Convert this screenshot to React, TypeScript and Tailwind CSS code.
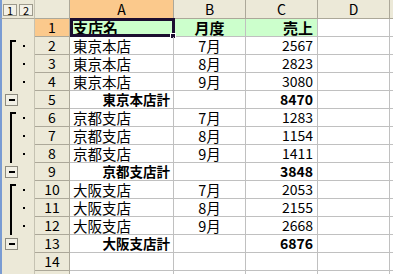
import React from "react";

type Row = { n: number; a?: string; b?: string; c?: string; head?: boolean; total?: boolean; ol?: "start" | "mid" | "btn"; hideNum?: boolean };

const rows: Row[] = [
  { n: 1, a: "支店名", b: "月度", c: "売上", head: true },
  { n: 2, a: "東京本店", b: "7月", c: "2567", ol: "start" },
  { n: 3, a: "東京本店", b: "8月", c: "2823", ol: "mid" },
  { n: 4, a: "東京本店", b: "9月", c: "3080", ol: "mid" },
  { n: 5, a: "東京本店計", c: "8470", total: true, ol: "btn" },
  { n: 6, a: "京都支店", b: "7月", c: "1283", ol: "start" },
  { n: 7, a: "京都支店", b: "8月", c: "1154", ol: "mid" },
  { n: 8, a: "京都支店", b: "9月", c: "1411", ol: "mid" },
  { n: 9, a: "京都支店計", c: "3848", total: true, ol: "btn" },
  { n: 10, a: "大阪支店", b: "7月", c: "2053", ol: "start" },
  { n: 11, a: "大阪支店", b: "8月", c: "2155", ol: "mid" },
  { n: 12, a: "大阪支店", b: "9月", c: "2668", ol: "mid" },
  { n: 13, a: "大阪支店計", c: "6876", total: true, ol: "btn" },
  { n: 14 },
  { n: 15, hideNum: true },
];

function Outline({ ol }: { ol?: Row["ol"] }) {
  return (
    <div className="relative w-[35px] shrink-0 h-full bg-[#ece9d8] border-l-2 border-l-[#7a9cd3] border-r border-r-[#c5c2b2]">
      {ol === "start" && (
        <>
          <div className="absolute left-[8px] top-[3px] w-[2px] h-[15px] bg-black" />
          <div className="absolute left-[8px] top-[3px] w-[6px] h-[2px] bg-black" />
        </>
      )}
      {ol === "mid" && <div className="absolute left-[8px] top-0 w-[2px] h-[18px] bg-black" />}
      {(ol === "start" || ol === "mid") && (
        <div className="absolute left-[21px] top-[8px] w-[2px] h-[2px] bg-black" />
      )}
      {ol === "btn" && (
        <div className="absolute left-[3px] top-[3px] w-[13px] h-[12px] border border-[#8e8c80] bg-[#f1efe4] flex items-center justify-center">
          <div className="w-[6px] h-[2px] bg-black" />
        </div>
      )}
    </div>
  );
}

export default function App() {
  const font = "font-['Noto_Sans_CJK_JP','Liberation_Sans',sans-serif]";
  return (
    <div className={`w-[393px] h-[274px] overflow-hidden bg-white text-black ${font}`}>
      {/* header row */}
      <div className="flex h-[19px]">
        <div className="relative w-[35px] shrink-0 h-full bg-[#ece9d8] border-l-2 border-l-[#7a9cd3] border-r border-r-[#c5c2b2] border-b border-b-[#aca899]">
          <div className="absolute left-[1px] top-[4px] w-[14px] h-[12px] border border-[#9d9a8c] bg-[#f3f1e7] text-[11px] leading-[10px] flex items-center justify-center">1</div>
          <div className="absolute left-[17px] top-[4px] w-[14px] h-[12px] border border-[#9d9a8c] bg-[#f3f1e7] text-[11px] leading-[10px] flex items-center justify-center">2</div>
        </div>
        <div className="w-[35px] shrink-0 bg-[#ece9d8] border-r border-b border-[#aca899]" />
        <div className="w-[104px] shrink-0 bg-[#fbc98c] border-r border-b border-[#aca899] text-center text-[14px] leading-[18px]">A</div>
        <div className="w-[72px] shrink-0 bg-[#ece9d8] border-r border-b border-[#aca899] text-center text-[14px] leading-[18px]">B</div>
        <div className="w-[72px] shrink-0 bg-[#ece9d8] border-r border-b border-[#aca899] text-center text-[14px] leading-[18px]">C</div>
        <div className="w-[72px] shrink-0 bg-[#ece9d8] border-r border-b border-[#aca899] text-center text-[14px] leading-[18px]">D</div>
        <div className="flex-1 bg-[#ece9d8] border-b border-[#aca899]" />
      </div>
      {rows.map((r) => (
        <div key={r.n} className="flex h-[18px]">
          <Outline ol={r.ol} />
          <div
            className={`w-[35px] shrink-0 border-r border-b border-[#aca899] text-center text-[14px] leading-[17px] ${
              r.head ? "bg-[#fbc98c]" : "bg-[#ece9d8]"
            }`}
          >
            {r.hideNum ? "" : r.n}
          </div>
          <div
            className={`relative w-[104px] shrink-0 border-r border-b border-[#c0c0c0] px-[3px] leading-[17px] whitespace-nowrap ${
              r.head ? "bg-[#ccffcc] font-bold text-[15px]" : r.total ? "text-right font-bold text-[13.5px]" : "text-[14.5px]"
            }`}
          >
            {r.a}
            {r.head && (
              <>
                <div className="absolute left-0 top-[-1px] w-[105px] h-[19px] border-[3px] border-[#1c0d30]" />
                <div className="absolute left-[100px] top-[14px] w-[6px] h-[6px] bg-[#1c0d30] border border-white" />
              </>
            )}
          </div>
          <div
            className={`w-[72px] shrink-0 border-r border-b border-[#c0c0c0] text-center leading-[17px] whitespace-nowrap ${
              r.head ? "bg-[#ccffcc] font-bold text-[15px]" : "text-[14.5px]"
            }`}
          >
            {r.b}
          </div>
          <div
            className={`w-[72px] shrink-0 border-r border-b border-[#c0c0c0] text-right pr-[4px] leading-[17px] whitespace-nowrap ${
              r.head ? "bg-[#ccffcc] font-bold text-[15px]" : "text-[14px]"
            } ${r.total ? "font-bold" : ""}`}
          >
            {r.c}
          </div>
          <div className="w-[72px] shrink-0 border-r border-b border-[#c0c0c0]" />
          <div className="flex-1 border-b border-[#c0c0c0]" />
        </div>
      ))}
    </div>
  );
}
